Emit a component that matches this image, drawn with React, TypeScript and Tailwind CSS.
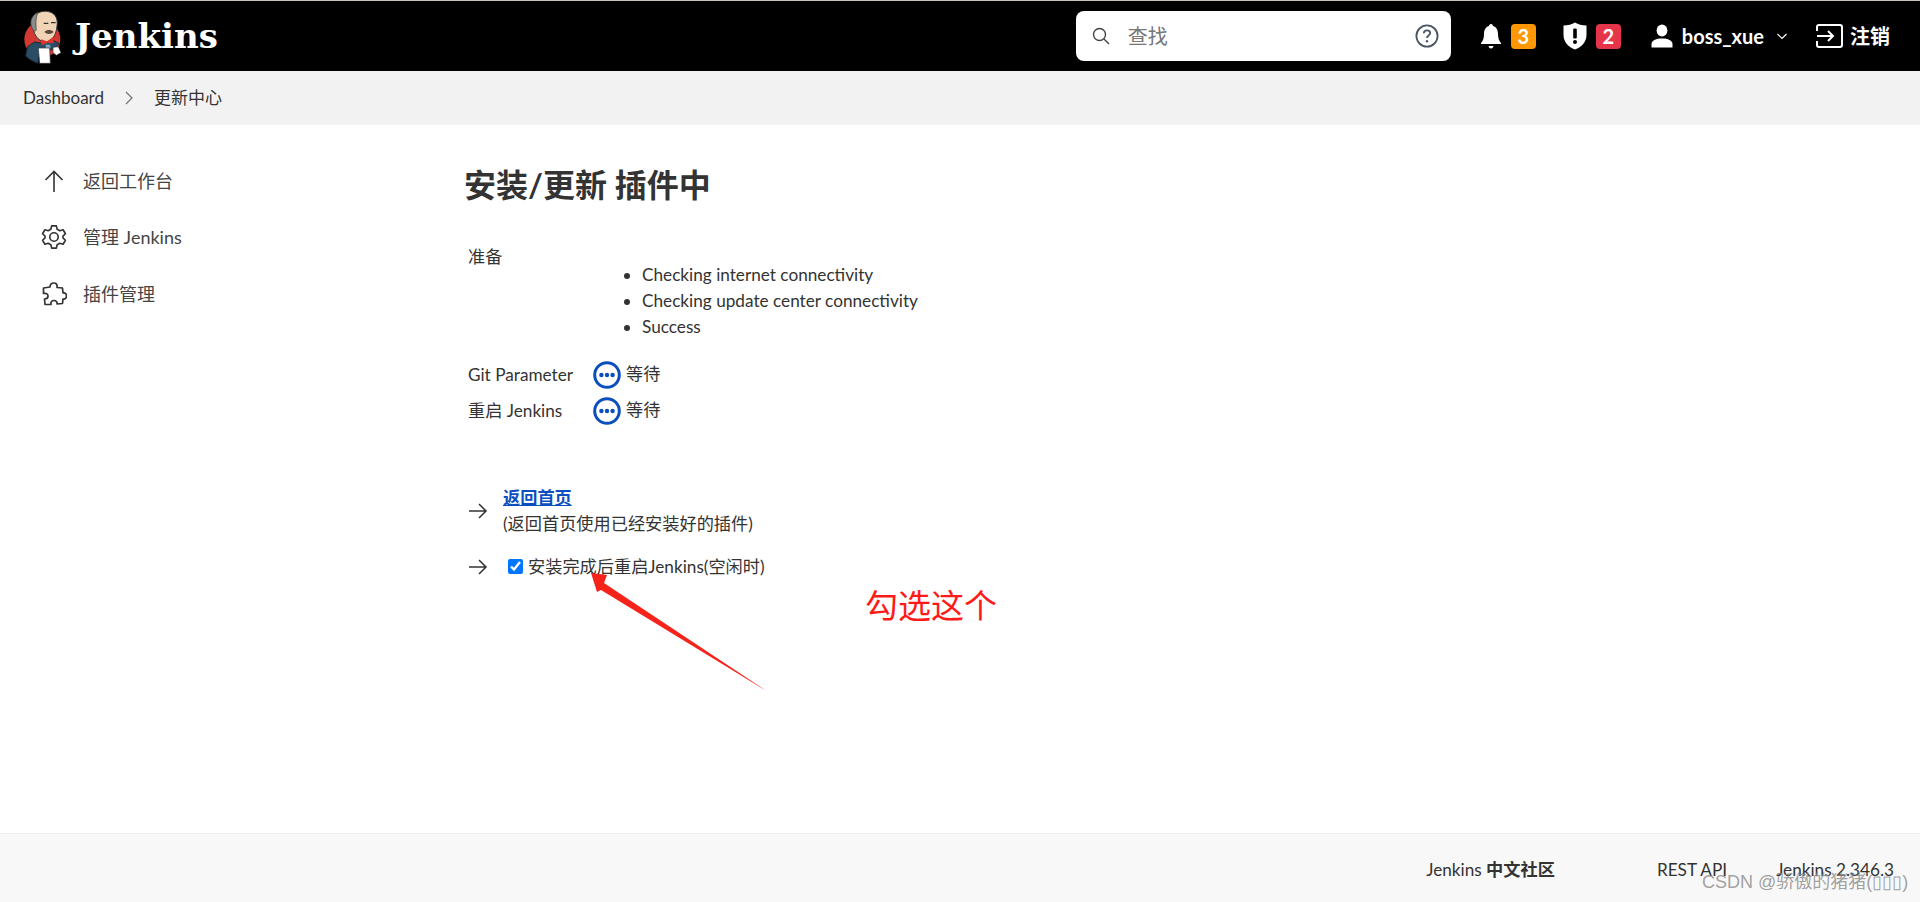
import React from "react";

const sans = '"Lato","Noto Sans CJK SC",sans-serif';

function Logo() {
  return (
    <svg width="60" height="60" viewBox="0 0 180 180" className="shrink-0">
      <circle cx="82" cy="100" r="54" fill="#d33833" />
      <path d="M58 108 L38 122 L32 150 L44 160 L68 172 L76 132 L108 130 L122 130 L132 112 L104 98 L84 112 Z" fill="#2a4d66" stroke="#1b2c38" strokeWidth="3" />
      <path d="M52 55 C50 25 75 14 95 16 C118 18 130 35 126 60 C124 85 112 108 90 108 C68 106 54 82 52 55 Z" fill="#f1d4b5" stroke="#3a3a3a" strokeWidth="3" />
      <path d="M52 68 C42 50 48 28 70 18 C62 32 62 50 64 72 C60 78 56 76 52 68 Z" fill="#8b8b8b" stroke="#333" strokeWidth="2" />
      <path d="M86 52 h14 M108 50 h14" stroke="#333" strokeWidth="4" />
      <path d="M88 78 C96 70 108 70 116 78 C108 86 96 86 88 78 Z" fill="#5c4a3c" />
      <path d="M78 100 L96 106 L114 94 L116 112 L98 110 L80 118 Z" fill="#e0352f" />
      <path d="M92 116 h14 v10 h-14 z" fill="#7fa6b8" />
      <path d="M70 126 H104 L106 172 H74 Z" fill="#fff" stroke="#333" strokeWidth="2" />
      <path d="M114 124 L130 122 L138 140 L124 148 L114 140 Z" fill="#fff" stroke="#333" strokeWidth="2" />
    </svg>
  );
}

function WaitIcon() {
  return (
    <svg width="28" height="28" viewBox="0 0 28 28" className="shrink-0">
      <circle cx="14" cy="14" r="12.3" fill="none" stroke="#0b4fbf" strokeWidth="3" />
      <circle cx="8.4" cy="14" r="2.2" fill="#0b4fbf" />
      <circle cx="14" cy="14" r="2.2" fill="#0b4fbf" />
      <circle cx="19.6" cy="14" r="2.2" fill="#0b4fbf" />
    </svg>
  );
}

function ArrowRight() {
  return (
    <svg width="20" height="20" viewBox="0 0 20 20" className="shrink-0" fill="none" stroke="#333" strokeWidth="1.5">
      <path d="M1 10 H18 M11 3 L18 10 L11 17" />
    </svg>
  );
}

export default function App() {
  return (
    <div className="relative flex h-[902px] flex-col overflow-hidden bg-white text-[#333]" style={{ fontFamily: sans }}>
      <header className="flex h-[71px] shrink-0 items-center border-t border-[#c9c2bb] bg-black text-white">
        <div className="ml-[15px] flex items-center">
          <Logo />
          <span className="ml-[0px] text-[34px] font-bold leading-none" style={{ fontFamily: '"DejaVu Serif",serif' }}>Jenkins</span>
        </div>
        <div className="ml-auto flex h-[50px] w-[375px] items-center rounded-lg bg-white pl-[16px] pr-[12px]">
          <svg width="18" height="18" viewBox="0 0 18 18" fill="none" stroke="#444" strokeWidth="1.4" className="shrink-0">
            <circle cx="7.5" cy="7.5" r="6" />
            <path d="M12 12 L17 17" />
          </svg>
          <span className="ml-[18px] text-[20px] text-[#777]">查找</span>
          <svg width="24" height="24" viewBox="0 0 24 24" fill="none" className="ml-auto shrink-0">
            <circle cx="12" cy="12" r="10.6" stroke="#4b5563" strokeWidth="1.8" />
            <path d="M8.8 9.3 C8.8 7.3 10.3 6.3 12 6.3 C13.8 6.3 15.2 7.5 15.2 9.1 C15.2 11.5 12 11.6 12 14" stroke="#4b5563" strokeWidth="1.8" />
            <circle cx="12" cy="17.2" r="1.2" fill="#4b5563" />
          </svg>
        </div>
        <svg width="22" height="26" viewBox="0 0 22 26" fill="#fff" className="ml-[29px] shrink-0">
          <path d="M11 1 C12.4 1 13 2 13 3 C16.5 4 18 7 18 11 C18 15 19 18 21 20 V21 H1 V20 C3 18 4 15 4 11 C4 7 5.5 4 9 3 C9 2 9.6 1 11 1 Z" />
          <path d="M8.5 23 H13.5 C13.3 24.6 12.3 25.5 11 25.5 C9.7 25.5 8.7 24.6 8.5 23 Z" />
        </svg>
        <span className="ml-[9px] flex h-[25px] w-[25px] items-center justify-center rounded-[4px] bg-[#ff9800] text-[20px] font-bold">3</span>
        <svg width="24" height="28" viewBox="0 0 24 28" className="ml-[27px] shrink-0">
          <path d="M12 0.5 C15 2.5 19 3.5 23.5 3.5 V13 C23.5 20 18.5 25 12 27.5 C5.5 25 0.5 20 0.5 13 V3.5 C5 3.5 9 2.5 12 0.5 Z" fill="#fff" />
          <rect x="10.2" y="6.5" width="3.6" height="10" rx="1.2" fill="#000" />
          <circle cx="12" cy="20" r="2" fill="#000" />
        </svg>
        <span className="ml-[9px] flex h-[25px] w-[25px] items-center justify-center rounded-[4px] bg-[#e6354a] text-[20px] font-bold">2</span>
        <svg width="22" height="24" viewBox="0 0 22 24" fill="#fff" className="ml-[30px] shrink-0">
          <ellipse cx="11" cy="6.5" rx="5.4" ry="6" />
          <path d="M0.5 23.5 V20 C0.5 16.5 5 14.5 11 14.5 C17 14.5 21.5 16.5 21.5 20 V23.5 Z" />
        </svg>
        <span className="ml-[9px] text-[20px] font-bold">boss_xue</span>
        <svg width="10" height="7" viewBox="0 0 10 7" fill="none" stroke="#fff" strokeWidth="1.2" className="ml-[13px] shrink-0">
          <path d="M0.5 1 L5 5.5 L9.5 1" />
        </svg>
        <svg width="27" height="24" viewBox="0 0 27 24" fill="none" stroke="#fff" strokeWidth="2" className="ml-[29px] shrink-0">
          <path d="M1 7 V3 C1 2 2 1 3 1 H24 C25 1 26 2 26 3 V21 C26 22 25 23 24 23 H3 C2 23 1 22 1 21 V17" />
          <path d="M1 12 H17 M12 7 L17 12 L12 17" />
        </svg>
        <span className="ml-[7px] mr-[30px] text-[20px] font-bold">注销</span>
      </header>

      <nav className="flex h-[54px] shrink-0 items-center bg-[#f2f2f2] pl-[23px] text-[17px]">
        <span>Dashboard</span>
        <svg width="8" height="14" viewBox="0 0 8 14" fill="none" stroke="#777" strokeWidth="1.3" className="ml-[21px] mr-[21px]">
          <path d="M1 1 L7 7 L1 13" />
        </svg>
        <span>更新中心</span>
      </nav>

      <main className="flex min-h-0 flex-1">
        <aside className="w-[465px] shrink-0 pl-[41px] pt-[42px] text-[18px] text-[#444]">
          <div className="flex h-[28px] items-center">
            <svg width="26" height="26" viewBox="0 0 26 26" fill="none" stroke="#333" strokeWidth="1.6" className="shrink-0">
              <path d="M13 24 V4 M4.5 12 L13 3.5 L21.5 12" />
            </svg>
            <span className="ml-[16px]">返回工作台</span>
          </div>
          <div className="mt-[28px] flex h-[28px] items-center">
            <svg width="28" height="28" viewBox="0 0 24 24" fill="none" stroke="#333" strokeWidth="1.4" strokeLinejoin="round" className="-ml-px -mr-px shrink-0">
              <path d="M10 2.5 H14 L14.7 5.3 L17 6.6 L19.8 5.8 L21.8 9.2 L19.7 11.2 V12.8 L21.8 14.8 L19.8 18.2 L17 17.4 L14.7 18.7 L14 21.5 H10 L9.3 18.7 L7 17.4 L4.2 18.2 L2.2 14.8 L4.3 12.8 V11.2 L2.2 9.2 L4.2 5.8 L7 6.6 L9.3 5.3 Z" />
              <circle cx="12" cy="12" r="3.6" />
            </svg>
            <span className="ml-[16px]">管理 Jenkins</span>
          </div>
          <div className="mt-[29px] flex h-[28px] items-center">
            <svg width="26" height="26" viewBox="0 0 26 26" fill="none" stroke="#333" strokeWidth="1.7" strokeLinejoin="round" className="shrink-0">
              <path d="M9 6 C9 3 11 2 13 2 C15 2 16.5 3.5 16 6.5 L21.5 7 L22 12 C24.5 11.5 25.5 13 25.5 15 C25.5 17 24 18.5 22 18 L21.5 22.5 L16 23 C16.5 21 15 19.5 13 19.5 C11 19.5 9.5 21 10 23.5 L4 23.5 L3.5 18 C5.5 18 7 17 7 15 C7 13 5 12 2.5 12.5 L2.5 7 Z" />
            </svg>
            <span className="ml-[16px]">插件管理</span>
          </div>
        </aside>

        <section className="min-w-0 flex-1 pt-[38px]">
          <h1 className="-ml-px text-[32px] font-bold leading-[44px]">安装/更新 插件中</h1>
          <div className="mt-[37px] pl-[3px] text-[17.2px] leading-[26px]">
            <div>准备</div>
            <ul className="-mt-[8px] ml-[174px] list-disc pl-0">
              <li>Checking internet connectivity</li>
              <li>Checking update center connectivity</li>
              <li>Success</li>
            </ul>
            <div className="mt-[17px] flex h-[36px] items-center">
              <span className="w-[125px]">Git Parameter</span>
              <WaitIcon />
              <span className="ml-[5px] -translate-y-px">等待</span>
            </div>
            <div className="flex h-[36px] items-center">
              <span className="w-[125px]">重启 Jenkins</span>
              <WaitIcon />
              <span className="ml-[5px] -translate-y-px">等待</span>
            </div>
          </div>

          <div className="mt-[56px] flex items-center pl-[3px] text-[17.2px] leading-[26px]">
            <ArrowRight />
            <div className="ml-[15px]">
              <a className="block font-bold text-[#0b4fbf] underline">返回首页</a>
              <div>(返回首页使用已经安装好的插件)</div>
            </div>
          </div>
          <div className="mt-[17px] flex items-center pl-[3px] text-[17.2px] leading-[26px]">
            <ArrowRight />
            <input type="checkbox" defaultChecked className="ml-[20px] mr-[5px] h-[15px] w-[15px] -translate-y-[1px] accent-[#0075ff]" />
            <span>安装完成后重启Jenkins(空闲时)</span>
          </div>
          <div className="ml-[400px] mt-[3px] text-[33px] leading-[44px] text-[#ff1a1a]">勾选这个</div>
        </section>
      </main>

      <footer className="flex h-[69px] shrink-0 items-center border-t border-[#eeeeee] bg-[#f8f8f8] pt-[3px] text-[17.2px]">
        <div className="ml-auto">Jenkins <b>中文社区</b></div>
        <div className="ml-[102px]">REST API</div>
        <div className="ml-[49px] mr-[26px]">Jenkins 2.346.3</div>
      </footer>

      <svg width="180" height="130" viewBox="0 0 180 130" className="absolute left-[585px] top-[568px]">
        <path d="M6 5 L22 7 L19 15 L180 122 L16 22 L12 24 Z" fill="#f5231a" />
      </svg>
      <div className="absolute left-[1702px] top-[869px] whitespace-nowrap text-[18px] leading-[26px] text-[#8a8a8a]/80" style={{ fontFamily: '"Liberation Sans","Noto Sans CJK SC",sans-serif' }}>
        CSDN @骄傲的猪猪(▯▯▯)
      </div>
    </div>
  );
}
